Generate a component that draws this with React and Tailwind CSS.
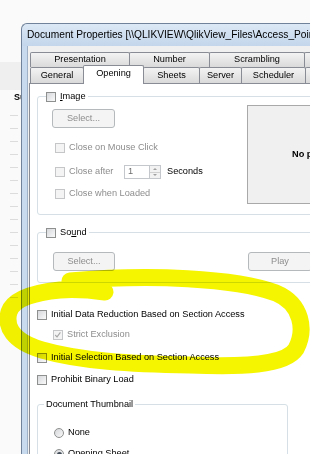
import React from "react";

const Check = ({ disabled, checked }) => (
  <span
    className={`relative inline-block w-[10px] h-[10px] shrink-0 border ${
      disabled
        ? "border-[#c4c6c8] bg-[#f4f4f4]"
        : "border-[#8e8f8f] bg-gradient-to-br from-[#d6d8db] to-[#fafafa]"
    }`}
  >
    {checked && (
      <svg viewBox="0 0 10 10" className="absolute left-0 top-0 w-[8px] h-[8px]">
        <path d="M1.5 5 L3.8 7.3 L8 1.8" fill="none" stroke="#a6a6a6" strokeWidth="1.4" />
      </svg>
    )}
  </span>
);

const Radio = ({ checked }) => (
  <span className="relative inline-flex items-center justify-center w-[10px] h-[10px] shrink-0 rounded-full border border-[#8e8f8f] bg-gradient-to-br from-[#d4d6d9] to-[#fafafa]">
    {checked && <span className="w-[5px] h-[5px] rounded-full bg-[#3f4a56]" />}
  </span>
);

const Button = ({ children, className = "", disabled }) => (
  <div
    className={`flex items-center justify-center h-[19px] rounded-[3px] border ${
      disabled ? "border-[#b5b9bc] bg-[#f4f4f4] text-[#8d8d8d]" : "border-[#707070] bg-[#ececec]"
    } ${className}`}
  >
    {children}
  </div>
);

const Row = ({ label, disabled, checked, className = "" }) => (
  <div className={`flex items-center h-[10px] ${className}`}>
    <Check disabled={disabled} checked={checked} />
    <span className={`ml-[4px] leading-none ${disabled ? "text-[#8d8d8d]" : "text-black"}`}>{label}</span>
  </div>
);

const Tab = ({ label, w, first }) => (
  <div
    className={`flex items-center justify-center h-full border border-b-0 border-[#898c95] bg-gradient-to-b from-[#f3f3f3] to-[#dadada] rounded-t-[2px] ${
      first ? "" : "-ml-px"
    }`}
    style={{ width: w }}
  >
    {label}
  </div>
);

export default function App() {
  const ticks = [112, 125, 137, 150, 163, 177, 190, 202, 215, 228, 241, 254, 267, 280, 294];

  return (
    <div className="relative w-[310px] h-[454px] overflow-hidden bg-[#fafafa] flex items-start font-['Liberation_Sans',Arial,sans-serif] text-[9.2px] text-black">
      {/* background app strip */}
      <div className="relative w-[21px] shrink-0 overflow-hidden">
        <div className="mt-[62px] h-[28px] bg-[#efefef]" />
        <div className="pl-[14px] mt-[1px] h-[12px] text-[9px] font-bold leading-[12px] whitespace-nowrap">Su</div>
        {ticks.map((t, i) => (
          <div key={i} className="ml-[10px] w-[8px] h-px bg-[#dcdcdc] mt-[12px]" />
        ))}
      </div>

      {/* dialog window */}
      <div className="mt-[23px] w-[320px] shrink-0 flex flex-col">
        <div className="shrink-0 h-[23px] rounded-tl-[6px] border-l border-t border-[#6f8299] bg-gradient-to-b from-[#dce8f5] to-[#c3d6eb] flex items-center pl-[5px] whitespace-nowrap text-[10.2px]">
          {"Document Properties [\\\\QLIKVIEW\\QlikView_Files\\Access_Point\\Sales.qvw]"}
        </div>
        <div className="flex shrink-0">
          <div className="w-[7px] shrink-0 border-l border-[#6f8299] bg-[#c8daee] border-r border-r-[#9fb1c6]" />
          <div className="flex-1 bg-[#f0f0f0] pt-[6px] flex flex-col">
            {/* tab rows */}
            <div className="ml-[2px] flex h-[15px] leading-none">
              <Tab label="Presentation" w={100} first />
              <Tab label="Number" w={81} />
              <Tab label="Scrambling" w={96} />
              <Tab label="Variables" w={90} />
            </div>
            <div className="ml-[2px] flex h-[16px] leading-none relative z-10">
              <Tab label="General" w={54} first />
              <div className="-ml-px relative w-[61px] h-[19px] -mt-[2px] border border-b-0 border-[#898c95] bg-white rounded-t-[2px] flex items-center justify-center pb-[2px]">
                Opening
              </div>
              <Tab label="Sheets" w={57} />
              <Tab label="Server" w={43} />
              <Tab label="Scheduler" w={65} />
              <Tab label="Security" w={70} />
            </div>

            {/* tab panel */}
            <div className="ml-[1px] border-l border-t border-[#898c95] bg-white pl-[7px] pt-[12px] pb-[20px]">
              {/* Image group */}
              <div className="relative h-[119px] w-[300px] border border-[#d5dfe5] rounded-[3px] flex">
                <div className="absolute left-[8px] -top-[5px] bg-white pr-[2px] flex items-center h-[10px]">
                  <Check />
                  <span className="ml-[4px]"><span className="underline">I</span>mage</span>
                </div>
                <div className="w-[209px] shrink-0 flex flex-col">
                  <Button disabled className="ml-[14px] mt-[12px] w-[63px] h-[18px]">Select...</Button>
                  <Row disabled label="Close on Mouse Click" className="ml-[17px] mt-[15px]" />
                  <div className="ml-[17px] mt-[12px] flex items-center h-[14px]">
                    <Check disabled />
                    <span className="ml-[4px] text-[#8d8d8d] w-[55px]">Close after</span>
                    <div className="w-[26px] h-[14px] border border-[#c4c7cb] bg-white text-[#6d6d6d] pl-[3px] flex items-center">1</div>
                    <div className="w-[11px] h-[14px] flex flex-col border border-l-0 border-[#c4c7cb]">
                      <div className="flex-1 bg-[#f2f2f2] border-b border-[#d0d0d0] flex items-center justify-center">
                        <span className="w-0 h-0 border-l-[2px] border-r-[2px] border-b-[2px] border-transparent border-b-[#a0a0a0]" />
                      </div>
                      <div className="flex-1 bg-[#f2f2f2] flex items-center justify-center">
                        <span className="w-0 h-0 border-l-[2px] border-r-[2px] border-t-[2px] border-transparent border-t-[#a0a0a0]" />
                      </div>
                    </div>
                    <span className="ml-[6px]">Seconds</span>
                  </div>
                  <Row disabled label="Close when Loaded" className="ml-[17px] mt-[10px]" />
                </div>
                <div className="mt-[8px] h-[99px] flex-1 border border-[#a9a9a9] bg-[#f0f0f0] flex items-center pl-[44px] font-bold whitespace-nowrap">
                  No picture
                </div>
              </div>

              {/* Sound group */}
              <div className="relative mt-[17px] h-[51px] w-[300px] border border-[#d5dfe5] rounded-[3px] flex items-start">
                <div className="absolute left-[8px] -top-[5px] bg-white pr-[2px] flex items-center h-[10px]">
                  <Check />
                  <span className="ml-[4px]">So<span className="underline">u</span>nd</span>
                </div>
                <Button disabled className="ml-[15px] mt-[19px] w-[62px] h-[18px]">Select...</Button>
                <Button disabled className="ml-[133px] mt-[19px] w-[64px]">Play</Button>
              </div>

              <Row label="Initial Data Reduction Based on Section Access" className="mt-[27px]" />
              <Row disabled checked label="Strict Exclusion" className="ml-[16px] mt-[10px]" />
              <Row label="Initial Selection Based on Section Access" className="mt-[13px]" />
              <Row label="Prohibit Binary Load" className="mt-[12px]" />

              {/* Document Thumbnail group */}
              <div className="relative mt-[19px] h-[80px] w-[251px] border border-[#d5dfe5] rounded-[3px] pl-[16px] pt-[23px]">
                <div className="absolute left-[6px] -top-[6px] bg-white px-[2px] leading-[11px]">Document Thumbnail</div>
                <div className="flex items-center h-[10px]">
                  <Radio />
                  <span className="ml-[4px]">None</span>
                </div>
                <div className="flex items-center h-[10px] mt-[11px]">
                  <Radio checked />
                  <span className="ml-[4px]">Opening Sheet</span>
                </div>
              </div>
            </div>
          </div>
        </div>
      </div>

      {/* yellow highlighter stroke */}
      <svg className="absolute left-0 top-0 pointer-events-none mix-blend-multiply" width="310" height="454" viewBox="0 0 310 454">
        <path
          d="M70 281 C150 274 235 278 276 293 C302 304 306 330 296 349 C285 366 240 367 190 365 C130 364 80 361 42 350 C12 341 5 326 9 312 C13 300 30 293 60 290 C75 289 90 290 105 292"
          fill="none"
          stroke="#f5f500"
          strokeWidth="17"
          strokeLinecap="round"
          strokeLinejoin="round"
        />
      </svg>
    </div>
  );
}
